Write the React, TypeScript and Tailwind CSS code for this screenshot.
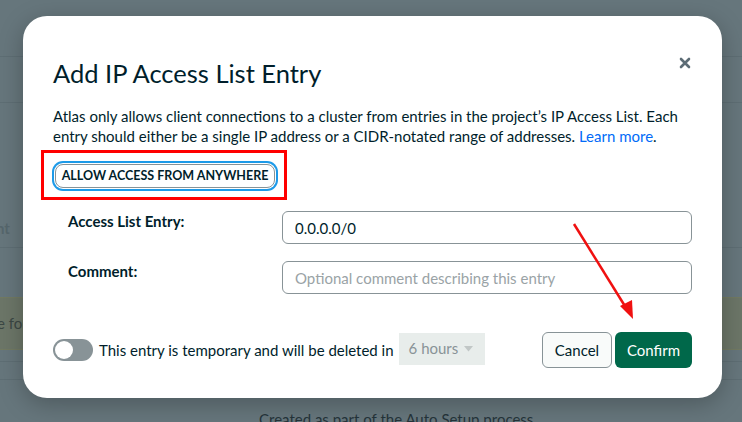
import { useState } from "react";

const font = { fontFamily: "Lato, 'Noto Sans', sans-serif" };

function Backdrop() {
  // faint page behind the dimmed overlay
  return (
    <div className="absolute inset-0 flex flex-col bg-[#66767c]">
      <div className="h-[57px] border-b border-[#5e6e74]" />
      <div className="h-[46px] border-b border-[#5e6e74]" />
      <div className="h-[145px] border-b border-[#5e6e74] flex items-end pb-[8px]">
        <span className="text-[15px] font-bold text-[#56666c] -ml-[4px]">nt</span>
      </div>
      <div className="h-[49px]" />
      <div className="h-[53px] bg-[#6c7668] border-y border-[#727a62] flex items-center">
        <span className="text-[15px] text-[#3b4744] -ml-[3px]">e fol</span>
      </div>
      <div className="h-[12px] border-b border-[#5e6e74]" />
      <div className="h-[18px] border-b border-[#5e6e74]" />
      <div className="flex-1 flex items-end justify-start pl-[259px]">
        <span className="text-[15px] leading-[18px] -mb-[6px] text-[#25343a]">Created as part of the Auto Setup process</span>
      </div>
    </div>
  );
}

export default function App() {
  const [entry, setEntry] = useState("0.0.0.0/0");
  const [comment, setComment] = useState("");

  return (
    <div className="relative w-[742px] h-[422px] overflow-hidden" style={font}>
      <Backdrop />

      {/* Modal */}
      <div className="absolute left-[23px] top-[16px] w-[699px] h-[382px] bg-white rounded-[24px] shadow-[0_6px_24px_rgba(0,0,0,0.25)] pt-[41px] px-[30px] pb-[30px] flex flex-col text-[#001e2b]">
        <button className="absolute right-[30px] top-[40px] w-[14px] h-[14px] flex items-center justify-center text-[#5c6c75]" aria-label="Close">
          <svg width="12" height="12" viewBox="0 0 12 12">
            <path d="M2 2 L10 10 M10 2 L2 10" stroke="currentColor" strokeWidth="2.6" strokeLinecap="round" />
          </svg>
        </button>

        <h2 className="text-[25.5px] leading-[32px] font-normal">Add IP Access List Entry</h2>

        <p className="mt-[17px] text-[15px] leading-[20px] text-[#001e2b]">
          Atlas only allows client connections to a cluster from entries in the project’s IP Access List. Each
          <br />
          entry should either be a single IP address or a CIDR-notated range of addresses.{" "}
          <a href="#" className="text-[#016bf8]">Learn more</a>.
        </p>

        <div className="mt-[4px] -ml-[12px] w-[246px] h-[50px] border-[3px] border-[#ff0000] pl-[10px] pt-[10px]">
          <button className="h-[24px] w-[220px] mt-[1px] ml-[1px] rounded-[8px] border border-[#889397] bg-white ring-2 ring-[#1d9ae8] ring-offset-1 text-[12.5px] font-bold text-[#001e2b] uppercase flex items-center justify-center">
            Allow access from anywhere
          </button>
        </div>

        <div className="mt-[11px] flex flex-col gap-[17px] pl-[15px]">
          <div className="flex items-start">
            <label className="w-[214px] text-[15px] leading-[20px] font-bold text-[#001e2b]">Access List Entry:</label>
            <input
              value={entry}
              onChange={(e) => setEntry(e.target.value)}
              className="w-[410px] h-[33px] rounded-[6px] border border-[#889397] px-[12px] text-[15px] text-[#001e2b] outline-none"
            />
          </div>
          <div className="flex items-start">
            <label className="w-[214px] text-[15px] leading-[20px] font-bold text-[#001e2b]">Comment:</label>
            <input
              value={comment}
              onChange={(e) => setComment(e.target.value)}
              placeholder="Optional comment describing this entry"
              className="w-[410px] h-[33px] rounded-[6px] border border-[#889397] px-[12px] text-[15px] text-[#001e2b] placeholder:text-[#9aa3a6] outline-none"
            />
          </div>
        </div>

        <div className="mt-auto flex items-center">
          <div className="w-[40px] h-[22px] rounded-full bg-[#889397] p-[2px] flex items-center">
            <div className="w-[18px] h-[18px] rounded-full bg-white" />
          </div>
          <span className="ml-[6px] text-[15px] text-[#001e2b]">This entry is temporary and will be deleted in</span>
          <div className="ml-[5px] w-[86px] h-[32px] bg-[#e8edeb] flex items-center justify-between pl-[10px] pr-[12px] -mt-[3px]">
            <span className="text-[15px] text-[#889397]">6 hours</span>
            <svg width="9" height="6" viewBox="0 0 9 6">
              <path d="M0 0 H9 L4.5 5.5 Z" fill="#c1c7c6" />
            </svg>
          </div>
          <div className="ml-auto flex gap-[3px]">
            <button className="w-[70px] h-[36px] rounded-[6px] border border-[#889397] bg-[#f9fbfa] text-[15px] text-[#001e2b]">Cancel</button>
            <button className="w-[77px] h-[36px] rounded-[6px] bg-[#00684a] text-[15px] text-white">Confirm</button>
          </div>
        </div>
      </div>

      {/* red annotation arrow */}
      <svg className="absolute inset-0 pointer-events-none" width="742" height="422">
        <line x1="574" y1="224" x2="628" y2="311" stroke="#f01010" strokeWidth="2.5" />
        <path d="M633 319 L620 306 L632 300 Z" fill="#f01010" />
      </svg>
    </div>
  );
}
